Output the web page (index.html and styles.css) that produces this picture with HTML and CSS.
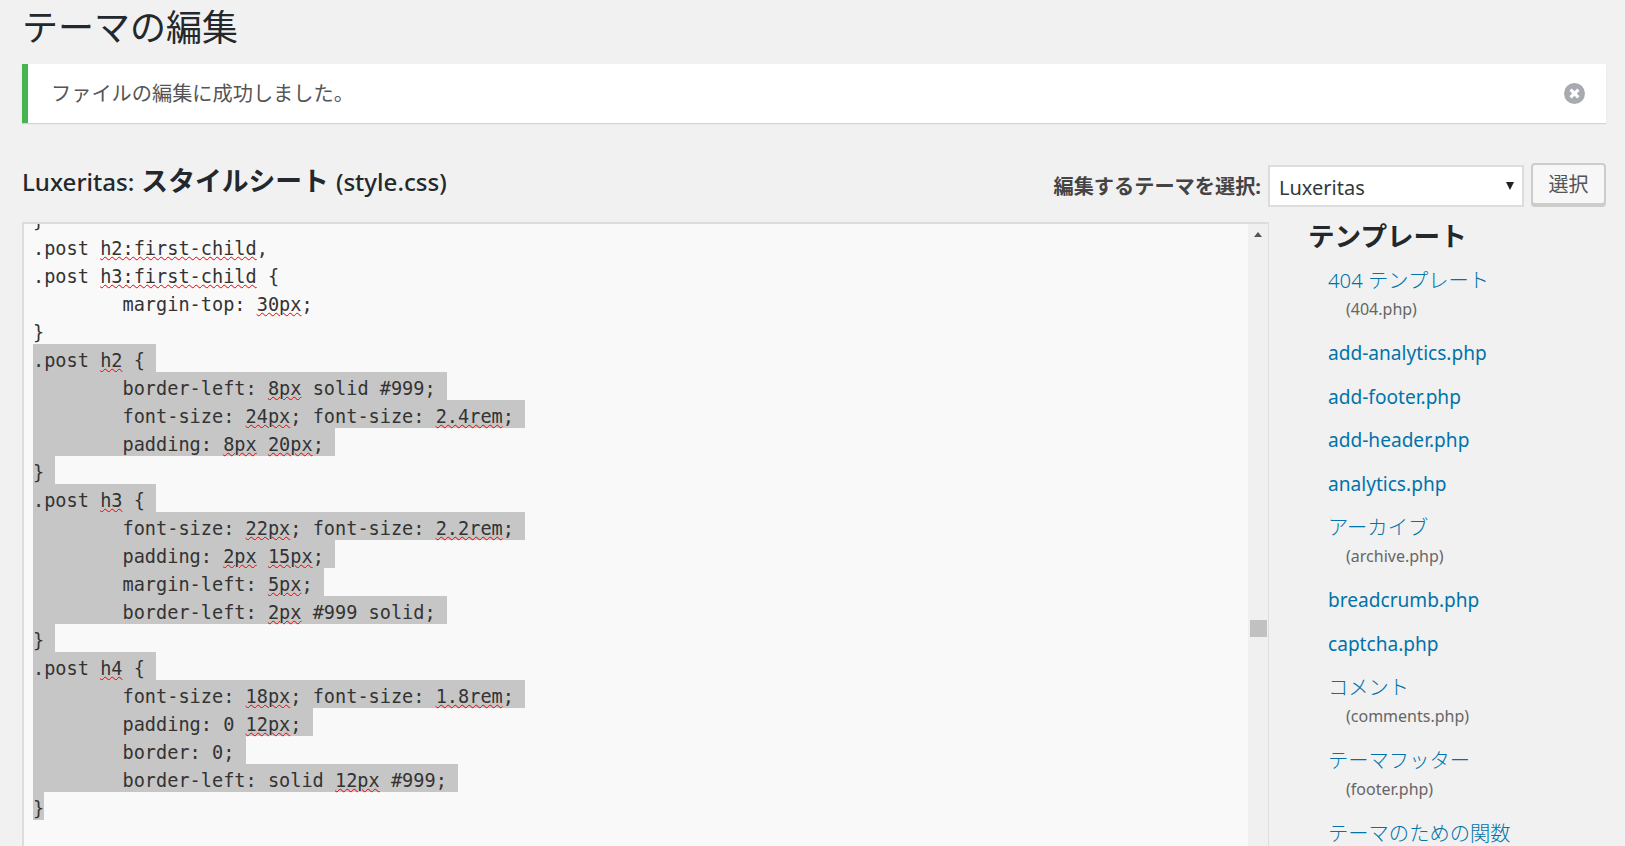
FILE: index.html
```html
<!DOCTYPE html>
<html lang="ja">
<head>
<meta charset="utf-8">
<title>テーマの編集</title>
<link rel="stylesheet" href="styles.css">
</head>
<body>
<div class="wrap">
  <h1 class="page-title">テーマの編集</h1>
  <div class="notice">
    <p class="notice-text">ファイルの編集に成功しました。</p>
    <svg class="dismiss" viewBox="0 0 21 21" aria-hidden="true"><circle cx="10.5" cy="10.5" r="10.5" fill="#a7abb0"/><path d="M6.6 6.6l7.8 7.8M14.4 6.6l-7.8 7.8" stroke="#fff" stroke-width="3.2" fill="none"/></svg>
  </div>
  <div class="file-bar">
    <h2 class="file-title"><span class="latin">Luxeritas:</span> <strong>スタイルシート</strong> <span class="latin">(style.css)</span></h2>
    <form class="theme-form">
      <label class="theme-label" for="theme">編集するテーマを選択:</label>
      <div class="select-box"><select id="theme" class="theme-select"><option>Luxeritas</option></select></div>
      <button type="button" class="btn">選択</button>
    </form>
  </div>
  <div class="content">
    <div class="editor">
      <div class="code-pane">
        <div class="code">
          <div class="ln">}</div>
          <div class="ln">.post <u>h2:first-child</u>,</div>
          <div class="ln">.post <u>h3:first-child</u> {</div>
          <div class="ln">        margin-top: <u>30px</u>;</div>
          <div class="ln">}</div>
          <div class="ln"><span class="sel">.post <u>h2</u> { </span></div>
          <div class="ln"><span class="sel">        border-left: <u>8px</u> solid #999; </span></div>
          <div class="ln"><span class="sel">        font-size: <u>24px</u>; font-size: <u>2.4rem</u>; </span></div>
          <div class="ln"><span class="sel">        padding: <u>8px</u> <u>20px</u>; </span></div>
          <div class="ln"><span class="sel">} </span></div>
          <div class="ln"><span class="sel">.post <u>h3</u> { </span></div>
          <div class="ln"><span class="sel">        font-size: <u>22px</u>; font-size: <u>2.2rem</u>; </span></div>
          <div class="ln"><span class="sel">        padding: <u>2px</u> <u>15px</u>; </span></div>
          <div class="ln"><span class="sel">        margin-left: <u>5px</u>; </span></div>
          <div class="ln"><span class="sel">        border-left: <u>2px</u> #999 solid; </span></div>
          <div class="ln"><span class="sel">} </span></div>
          <div class="ln"><span class="sel">.post <u>h4</u> { </span></div>
          <div class="ln"><span class="sel">        font-size: <u>18px</u>; font-size: <u>1.8rem</u>; </span></div>
          <div class="ln"><span class="sel">        padding: 0 <u>12px</u>; </span></div>
          <div class="ln"><span class="sel">        border: 0; </span></div>
          <div class="ln"><span class="sel">        border-left: solid <u>12px</u> #999; </span></div>
          <div class="ln"><span class="sel">}</span></div>
        </div>
      </div>
      <div class="scrollbar">
        <span class="arrow-up"></span>
        <span class="thumb"></span>
      </div>
    </div>
    <aside class="templates">
      <h3 class="templates-title">テンプレート</h3>
      <ul class="file-list">
        <li class="named"><a href="#">404 テンプレート</a><span class="fname">(404.php)</span></li>
        <li><a href="#">add-analytics.php</a></li>
        <li><a href="#">add-footer.php</a></li>
        <li><a href="#">add-header.php</a></li>
        <li><a href="#">analytics.php</a></li>
        <li class="named"><a href="#">アーカイブ</a><span class="fname">(archive.php)</span></li>
        <li><a href="#">breadcrumb.php</a></li>
        <li><a href="#">captcha.php</a></li>
        <li class="named"><a href="#">コメント</a><span class="fname">(comments.php)</span></li>
        <li class="named"><a href="#">テーマフッター</a><span class="fname">(footer.php)</span></li>
        <li class="named"><a href="#">テーマのための関数</a></li>
      </ul>
    </aside>
  </div>
</div>
</body>
</html>
```
FILE: styles.css
```css
html, body {
  margin: 0;
  height: 846px;
  overflow: hidden;
  background: #f1f1f1;
}
body {
  font-family: "Noto Sans", "Noto Sans CJK JP", sans-serif;
  font-size: 20px;
  color: #444;
}
.wrap {
  padding: 0 19px 0 22px;
}
.page-title {
  margin: 0 0 14px;
  padding-top: 6px;
  font-size: 36px;
  line-height: 44px;
  font-weight: 400;
  color: #23282d;
}
.notice {
  height: 59px;
  display: flex;
  align-items: center;
  justify-content: space-between;
  box-sizing: border-box;
  background: #fff;
  border-left: 6px solid #46b450;
  box-shadow: 0 1px 1px rgba(0, 0, 0, .12);
  padding: 0 21px 0 23px;
}
.notice-text {
  margin: -3px 0 0;
  color: #555;
  font-weight: 400;
  font-size: 20.2px;
}
.dismiss {
  width: 21px;
  height: 21px;
}
.file-bar {
  display: flex;
  justify-content: space-between;
  align-items: flex-start;
  height: 44px;
  margin: 40px 0 15px;
}
.file-title {
  margin: 0;
  font-size: 26.8px;
  line-height: 36px;
  font-weight: 500;
  color: #23282d;
}
.file-title .latin {
  font-size: 24.1px;
}
.file-title strong {
  font-weight: 700;
}
.theme-form {
  display: flex;
  align-items: flex-start;
  gap: 7px;
}
.theme-label {
  font-weight: 700;
  font-size: 20.2px;
  line-height: 34px;
  margin: 6px 0 0 0;
}
.select-box {
  position: relative;
  width: 256px;
  height: 42px;
  margin-top: 2px;
}
.select-box::after {
  content: "";
  position: absolute;
  top: 17px;
  right: 10px;
  border-style: solid;
  border-width: 8px 4px 0;
  border-color: #222 transparent transparent;
}
.theme-select {
  appearance: none;
  width: 100%;
  height: 100%;
  box-sizing: border-box;
  background: #fff;
  border: 2px solid #ddd;
  border-radius: 0;
  padding: 2px 0 0 9px;
  font: inherit;
  color: #32373c;
}
.btn {
  width: 75px;
  height: 42px;
  box-sizing: border-box;
  background: #f7f7f7;
  border: 2px solid #ccc;
  border-radius: 4px;
  box-shadow: 0 2px 0 #ccc;
  color: #555;
  font: inherit;
  padding: 0 0 1px;
}
.content {
  display: flex;
  align-items: flex-start;
}
.editor {
  display: flex;
  width: 1247px;
  height: 640px;
  flex: none;
  box-sizing: border-box;
  border: 2px solid #ddd;
  border-right: 1px solid #ddd;
  border-bottom: 0;
  background: #f9f9f9;
}
.code-pane {
  flex: 1;
  overflow: hidden;
  padding-left: 9px;
}
.code {
  margin-top: -20px;
  font-family: "DejaVu Sans Mono", monospace;
  font-size: 18.58px;
  line-height: 34px;
  color: #333;
}
.ln {
  height: 28px;
  white-space: pre;
}
.sel {
  display: inline-block;
  height: 28px;
  background: #c6c6c6;
}
.code u {
  text-decoration: underline wavy #f00000 1px;
  text-underline-offset: 1px;
}
.scrollbar {
  position: relative;
  width: 20px;
  flex: none;
  background: #f0f0f0;
}
.arrow-up {
  position: absolute;
  top: 8px;
  left: 6px;
  border-style: solid;
  border-width: 0 4.5px 5px;
  border-color: transparent transparent #555;
}
.thumb {
  position: absolute;
  top: 396px;
  left: 2px;
  width: 17px;
  height: 17px;
  background: #c1c1c1;
}
.templates {
  padding: 0 0 0 39px;
  flex: 1;
}
.templates-title {
  margin: 0 0 15px;
  font-size: 26.6px;
  line-height: 28px;
  font-weight: 700;
  color: #23282d;
}
.file-list {
  list-style: none;
  margin: 0;
  padding: 0 0 0 20px;
}
.file-list li {
  height: 43.5px;
  line-height: 30px;
  font-size: 19.1px;
}
.file-list li.named {
  height: auto;
  padding-bottom: 15px;
  font-size: 20.3px;
}
.file-list a {
  color: #0073aa;
  text-decoration: none;
  font-weight: 400;
}
.file-list .named a {
  font-weight: 300;
}
.fname {
  display: block;
  padding-left: 18px;
  font-size: 16px;
  line-height: 28px;
  color: #666;
}
```
